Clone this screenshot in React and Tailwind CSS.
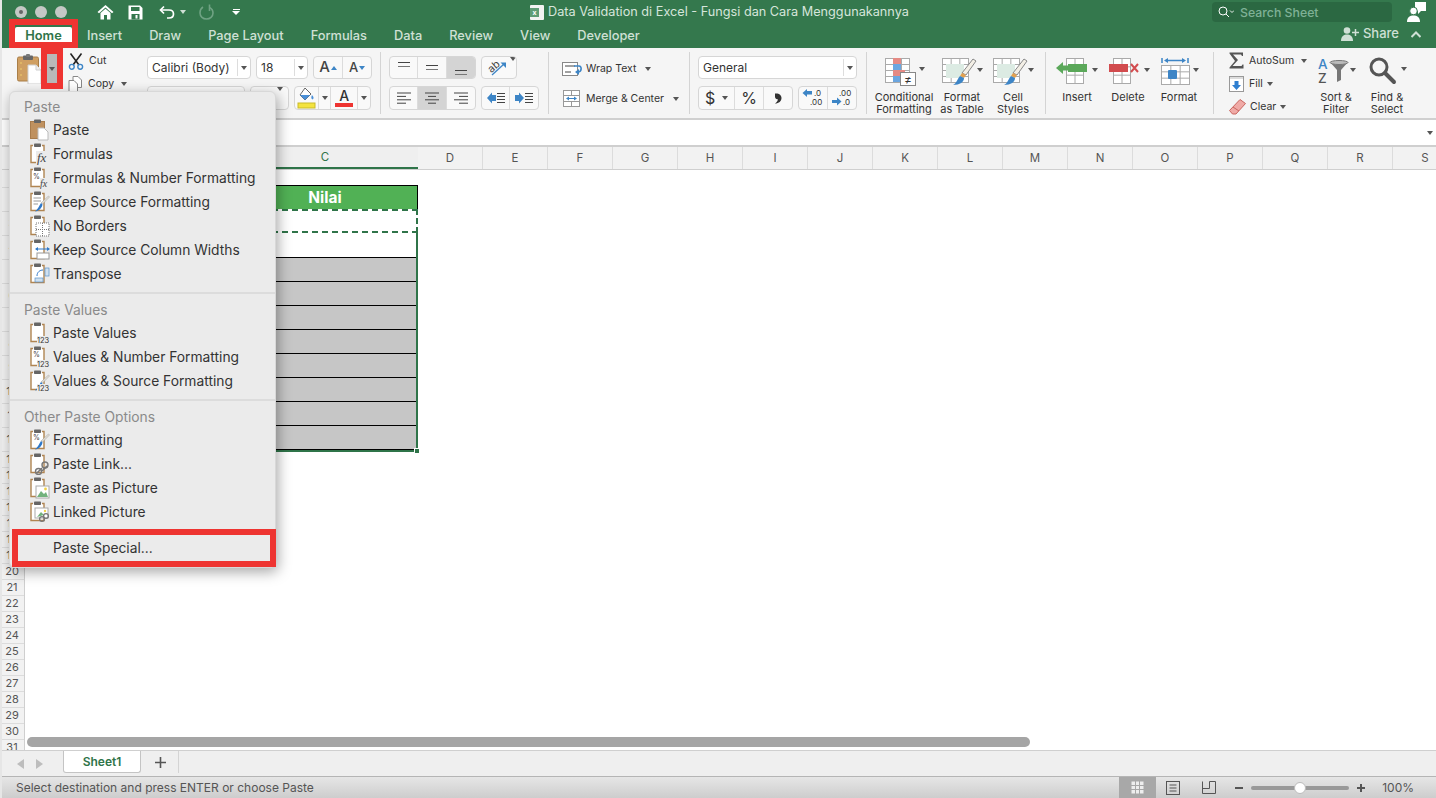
import React from "react";

const Caret = ({ className = "" }) => (
  <span className={`inline-block w-0 h-0 border-x-[3px] border-x-transparent border-t-[4px] border-t-[#555] ${className}`} />
);

const Sep = () => <div className="w-px self-stretch my-[4px] bg-[#d4d4d4] shrink-0" />;

const Seg = ({ className = "", children }) => (
  <div className={`flex items-stretch h-full bg-[#f9f9f9] border border-[#d6d6d6] rounded-[4px] overflow-hidden ${className}`}>
    {children}
  </div>
);

const Btn = ({ w, active, className = "", children }) => (
  <div className={`flex items-center justify-center border-r border-[#dcdcdc] last:border-r-0 ${w} ${active ? "bg-[#d4d4d4]" : ""} ${className}`}>
    {children}
  </div>
);

const Lines = ({ kind }) => {
  const rows = {
    left: [[0, 14], [0, 9], [0, 14], [0, 9]],
    center: [[0, 14], [3, 8], [0, 14], [3, 8]],
    right: [[0, 14], [5, 9], [0, 14], [5, 9]],
  }[kind];
  return (
    <svg width="14" height="12" viewBox="0 0 14 12">
      {rows.map(([x, w], i) => (
        <rect key={i} x={x} y={i * 3.4 + 0.5} width={w} height="1" fill="#444" />
      ))}
    </svg>
  );
};

const VAlign = ({ y }) => (
  <svg width="14" height="21" viewBox="0 0 14 21">
    <rect x="1" y={y} width="12" height="1" fill="#444" />
    <rect x="1" y={y + 4} width="12" height="1" fill="#777" />
  </svg>
);

const HomeIcon = () => (
  <svg width="17" height="16" viewBox="0 0 17 16">
    <path d="M8.5 1 L16.5 8 L15 9.3 L8.5 3.6 L2 9.3 L0.5 8 Z" fill="#fff" />
    <path d="M3.5 9 L8.5 4.8 L13.5 9 V15.5 H10 V11 H7 V15.5 H3.5 Z" fill="#fff" />
  </svg>
);

const SaveIcon = () => (
  <svg width="15" height="15" viewBox="0 0 15 15">
    <path d="M0.5 0.5 H12 L14.5 3 V14.5 H0.5 Z" fill="#fff" />
    <rect x="3" y="2" width="8.5" height="4" fill="#34784d" />
    <rect x="3.5" y="9" width="8" height="5.5" fill="#34784d" />
    <rect x="7.5" y="10" width="2" height="3.5" fill="#fff" />
  </svg>
);

const UndoIcon = ({ color = "#fff" }) => (
  <svg width="16" height="14" viewBox="0 0 16 14" fill="none">
    <path d="M5 1.5 L1.5 5 L5 8.5" stroke={color} strokeWidth="1.7" />
    <path d="M2 5 H10 C13 5 14.5 7 14.5 9 C14.5 11 13 13 10 13 H8" stroke={color} strokeWidth="1.7" />
  </svg>
);

const RedoIcon = () => (
  <svg width="15" height="16" viewBox="0 0 15 16" fill="none">
    <path d="M4 3 C1.5 4.5 1 7 1 9 C1 12.5 4 15 7.5 15 C11 15 14 12.5 14 9 C14 6.5 12.5 4.5 10.5 3.5" stroke="#6fa283" strokeWidth="1.6" />
    <path d="M10.5 0.5 V7" stroke="#6fa283" strokeWidth="1.6" />
  </svg>
);

const PasteBig = () => (
  <svg width="24" height="30" viewBox="0 0 24 30">
    <rect x="0.5" y="3" width="21" height="24" rx="1.5" fill="#cf9f62" stroke="#a97e48" />
    <circle cx="4" cy="9" r="0.8" fill="#f2d26b" />
    <circle cx="4" cy="15" r="0.8" fill="#f2d26b" />
    <circle cx="4" cy="21" r="0.8" fill="#f2d26b" />
    <rect x="6" y="1.5" width="10" height="4.5" rx="1" fill="#666" />
    <rect x="9" y="0" width="4" height="3" rx="1" fill="#777" />
    <path d="M11 11 H19 L24 16 V30 H11 Z" fill="#fff" stroke="#cfcfcf" />
    <path d="M19 11 V16 H24" fill="#eee" stroke="#cfcfcf" />
  </svg>
);

const CutIcon = () => (
  <svg width="16" height="17" viewBox="0 0 16 17" fill="none">
    <path d="M2.5 0.5 L11 12" stroke="#222" strokeWidth="1.6" />
    <path d="M13.5 0.5 L5 12" stroke="#222" strokeWidth="1.6" />
    <circle cx="3.8" cy="13.8" r="2.4" stroke="#3d85c6" strokeWidth="1.4" />
    <circle cx="12.2" cy="13.8" r="2.4" stroke="#3d85c6" strokeWidth="1.4" />
  </svg>
);

const CopyIcon = () => (
  <svg width="15" height="16" viewBox="0 0 15 16" fill="#fff" stroke="#888">
    <path d="M5 0.5 H10 L13.5 4 V11.5 H5 Z" />
    <path d="M1 4.5 H6 L9.5 8 V15.5 H1 Z" />
  </svg>
);

const FillIcon = () => (
  <svg width="20" height="22" viewBox="0 0 20 22">
    <path d="M8 1 L14 7 L8 13 L3 8 Z" fill="#fff" stroke="#666" />
    <path d="M3 8 L13 8 L8 13 Z" fill="#4a90d9" />
    <path d="M15 8 C17 10 17 12 15.5 12.5 C14 12 14 10 15 8 Z" fill="#4a90d9" />
    <rect x="1" y="16" width="17" height="5" fill="#f4e33f" stroke="#c9bb2d" />
  </svg>
);

const OrientIcon = () => (
  <svg width="22" height="20" viewBox="0 0 22 20">
    <text x="3" y="13" fontSize="10.5" fill="#444" transform="rotate(-40 9 10)" fontFamily="Inter, sans-serif">ab</text>
    <path d="M7 18 L19 7" stroke="#3d85c6" strokeWidth="1.3" />
    <path d="M15.5 5.5 H21 V11 Z" fill="#3d85c6" />
  </svg>
);

const Indent = ({ flip }) => (
  <svg width="18" height="12" viewBox="0 0 18 12">
    {flip ? <path d="M0 3 H4 V0.5 L9 6 L4 11.5 V9 H0 Z" fill="#3d85c6" /> : <path d="M9 3 H5 V0.5 L0 6 L5 11.5 V9 H9 Z" fill="#3d85c6" />}
    {[1, 4, 7, 10].map((y) => (
      <rect key={y} x="10" y={y} width="8" height="1" fill="#444" />
    ))}
  </svg>
);

const WrapIcon = () => (
  <svg width="21" height="16" viewBox="0 0 21 16" fill="none">
    <rect x="0.5" y="1.5" width="15" height="13" fill="#fff" stroke="#888" />
    <path d="M3 5 H13 M3 11 H9" stroke="#444" />
    <path d="M12 5 H17 C20 5 20 11 16 11" stroke="#3d85c6" strokeWidth="1.6" />
    <path d="M17 8 L13 11 L17 14 Z" fill="#3d85c6" />
  </svg>
);

const MergeIcon = () => (
  <svg width="17" height="17" viewBox="0 0 17 17" fill="none">
    <rect x="0.5" y="0.5" width="16" height="16" fill="#fff" stroke="#999" />
    <path d="M0.5 5.5 H16.5 M0.5 11.5 H16.5 M8.5 0.5 V5.5 M8.5 11.5 V16.5" stroke="#999" />
    <path d="M4 8.5 H13" stroke="#3d85c6" />
    <path d="M6 6.5 L3 8.5 L6 10.5 Z M11 6.5 L14 8.5 L11 10.5 Z" fill="#3d85c6" />
  </svg>
);

const DecIcon = ({ more }) => (
  <svg width="24" height="18" viewBox="0 0 24 18" fontFamily="Inter, sans-serif" fontSize="8" fill="#333">
    {more ? (
      <>
        <text x="9" y="7">.00</text>
        <text x="13" y="16">.0</text>
        <path d="M2 11 H7 V8.5 L11.5 12.5 L7 16.5 V14 H2 Z" fill="#3d85c6" />
      </>
    ) : (
      <>
        <text x="13" y="7">.0</text>
        <text x="9" y="16">.00</text>
        <path d="M11 2 H6 V0 L1.5 4 L6 8 V5.5 H11 Z" fill="#3d85c6" />
      </>
    )}
  </svg>
);

const CommaIcon = () => (
  <svg width="8" height="11" viewBox="0 0 8 11">
    <path d="M1 0.5 C5 0 7.5 2 7.5 5 C7.5 8 5 10.5 1 10.5 C3 9 4 7.5 3.8 6 C3 6.5 1 6 1 3.5 Z" fill="#333" />
  </svg>
);

const GridLines = ({ x, y, w, h, cols, rows }) => (
  <g stroke="#aaa" fill="none">
    <rect x={x + 0.5} y={y + 0.5} width={w} height={h} fill="#fff" />
    {Array.from({ length: cols - 1 }, (_, i) => (
      <path key={i} d={`M${x + 0.5 + ((i + 1) * w) / cols} ${y} V${y + h}`} />
    ))}
    {Array.from({ length: rows - 1 }, (_, i) => (
      <path key={i} d={`M${x} ${y + 0.5 + ((i + 1) * h) / rows} H${x + w}`} />
    ))}
  </g>
);

const SvgCaret = ({ x, y }) => <path d={`M${x} ${y} h6 l-3 4 z`} fill="#555" />;

const CondIcon = () => (
  <svg width="46" height="30" viewBox="0 0 46 30">
    <GridLines x={4} y={2} w={24} h={24} cols={3} rows={4} />
    <rect x="12" y="2" width="8" height="6" fill="#e58a84" />
    <rect x="12" y="8" width="8" height="6" fill="#6ba6e0" />
    <rect x="12" y="14" width="12" height="6" fill="#e58a84" />
    <rect x="12" y="20" width="8" height="6" fill="#6ba6e0" />
    <rect x="19.5" y="16.5" width="15" height="13" fill="#fff" stroke="#888" />
    <text x="27" y="27.5" fontSize="12" textAnchor="middle" fill="#333">≠</text>
    <SvgCaret x={38} y={11} />
  </svg>
);

const BrushIcon = ({ fill }) => (
  <svg width="46" height="30" viewBox="0 0 46 30">
    <GridLines x={3} y={2} w={26} h={24} cols={3} rows={4} />
    <rect x="7" y="8" width="18" height="14" fill={fill} />
    <path d="M34 3 L37 5 L27 19 L23 17 Z" fill="#f3efe6" stroke="#888" />
    <path d="M23 17 L27 19 L25 22 L21 20 Z" fill="#e3a14f" />
    <path d="M21 20 L25 22 C25 26 21 29 14 29 C18 27 18 23 21 20 Z" fill="#3d85c6" />
    <SvgCaret x={38} y={12} />
  </svg>
);

const InsertIcon = () => (
  <svg width="46" height="30" viewBox="0 0 46 30">
    <GridLines x={12} y={2} w={17} h={25} cols={2} rows={3} />
    <rect x="14" y="8" width="19" height="8" fill="#5ba85a" />
    <path d="M2 12 L9 6 V18 Z" fill="#5ba85a" />
    <rect x="8" y="9.5" width="6" height="5" fill="#5ba85a" />
    <SvgCaret x={38} y={12} />
  </svg>
);

const DeleteIcon = () => (
  <svg width="46" height="30" viewBox="0 0 46 30">
    <GridLines x={8} y={2} w={17} h={25} cols={2} rows={3} />
    <rect x="4" y="8" width="19" height="8" fill="#d24c4f" />
    <path d="M26 8 L33 16 M33 8 L26 16" stroke="#d24c4f" strokeWidth="2" />
    <SvgCaret x={39} y={12} />
  </svg>
);

const FormatIcon = () => (
  <svg width="46" height="30" viewBox="0 0 46 30">
    <GridLines x={5} y={9} w={28} h={19} cols={3} rows={3} />
    <rect x="12" y="14" width="9" height="9" rx="1" fill="#3d85c6" />
    <path d="M6 2 V7 M32 2 V7 M10 4.5 H28" stroke="#3d85c6" strokeWidth="1.5" />
    <path d="M12 2 L8 4.5 L12 7 Z M26 2 L30 4.5 L26 7 Z" fill="#3d85c6" />
    <SvgCaret x={37} y={12} />
  </svg>
);

const SortIcon = () => (
  <svg width="46" height="30" viewBox="0 0 46 30" fontFamily="Inter, sans-serif">
    <text x="5" y="13" fontSize="13.5" fontWeight="500" fill="#3d85c6">A</text>
    <text x="5" y="27" fontSize="13.5" fontWeight="500" fill="#555">Z</text>
    <path d="M17 6 H35 L28 14 V24 L24 26 V14 Z" fill="#777" />
    <ellipse cx="26" cy="6.5" rx="9" ry="2" fill="#bbb" stroke="#777" />
    <SvgCaret x={37} y={12} />
  </svg>
);

const FindIcon = () => (
  <svg width="46" height="30" viewBox="0 0 46 30" fill="none">
    <circle cx="15" cy="11" r="8" stroke="#555" strokeWidth="3" />
    <path d="M21 17 L30 26" stroke="#555" strokeWidth="4" strokeLinecap="round" />
    <SvgCaret x={37} y={11} />
  </svg>
);

const SigmaIcon = () => (
  <svg width="15" height="17" viewBox="0 0 15 17">
    <path d="M0.5 0.5 H14 V4 H13 L12 2.5 H4 L9 8 L3.5 14 H12.5 L13.5 12.5 H14.5 V16.5 H0.5 V15.5 L6 9 L0.5 1.5 Z" fill="#555" />
  </svg>
);

const FillDown = () => (
  <svg width="15" height="16" viewBox="0 0 15 16">
    <rect x="0.5" y="0.5" width="14" height="15" fill="#fff" stroke="#999" />
    <rect x="1" y="1" width="13" height="2" fill="#ddd" />
    <path d="M5.5 5 H9.5 V9 H12 L7.5 14 L3 9 H5.5 Z" fill="#2f7fd0" />
  </svg>
);

const EraserIcon = () => (
  <svg width="17" height="16" viewBox="0 0 17 16">
    <path d="M11 0.5 L16.5 4.5 L7 15 L3.5 15 L0.5 11.5 Z" fill="#f0aaa6" stroke="#c96660" />
    <path d="M4 8 L10 12" stroke="#c96660" />
  </svg>
);

const LargeTool = ({ icon, label, className = "" }) => (
  <div className={`flex flex-col items-center shrink-0 ${className}`}>
    <div className="h-[43px] pt-[8px] flex justify-center w-[46px]">{icon}</div>
    <div className="text-[11px] leading-[12px] text-center text-[#333] whitespace-pre-line">{label}</div>
  </div>
);

const Ribbon = () => (
  <div className="h-[70px] flex bg-[#f5f5f5] text-[#333] text-[10.5px] shrink-0">
    <div className="w-[147px] shrink-0 flex">
      <div className="ml-[17px] mt-[6px] w-[26px]"><PasteBig /></div>
      <div className="ml-[4px] mt-[6px] w-[10px] h-[29px] bg-[#b9b9b9] flex items-center justify-center"><Caret /></div>
      <div className="ml-[11px] mt-[5px] flex flex-col gap-[7px]">
        <div className="flex items-center gap-[5px] h-[16px]"><CutIcon /><span>Cut</span></div>
        <div className="flex items-center gap-[5px] h-[16px]"><CopyIcon /><span>Copy</span><Caret className="ml-[2px]" /></div>
      </div>
    </div>

    <div className="w-[233px] shrink-0 pt-[8px] flex flex-col gap-[7px]">
      <div className="flex h-[23px] gap-[5px]">
        <div className="w-[104px] flex items-center bg-white border border-[#d6d6d6] rounded-[4px] text-[12px] pl-[4px]">
          <span className="flex-1 whitespace-nowrap">Calibri (Body)</span>
          <span className="border-l border-[#ddd] h-[17px] w-[13px] flex items-center justify-center"><Caret /></span>
        </div>
        <div className="w-[52px] flex items-center bg-white border border-[#d6d6d6] rounded-[4px] text-[12px] pl-[4px]">
          <span className="flex-1">18</span>
          <span className="border-l border-[#ddd] h-[17px] w-[13px] flex items-center justify-center"><Caret /></span>
        </div>
        <Seg className="w-[59px]">
          <Btn w="w-[30px]"><span className="text-[15px] font-medium text-[#444]">A</span><span className="ml-px w-0 h-0 border-x-[3px] border-x-transparent border-b-[4px] border-b-[#3d85c6]" /></Btn>
          <Btn w="w-[29px]"><span className="text-[13px] font-medium text-[#444]">A</span><span className="ml-px w-0 h-0 border-x-[3px] border-x-transparent border-t-[4px] border-t-[#3d85c6]" /></Btn>
        </Seg>
      </div>
      <div className="flex h-[24px] gap-[5px]">
        <Seg className="w-[98px]" />
        <Seg className="w-[39px] justify-end items-center pr-[5px]"><Caret /></Seg>
        <Seg className="w-[77px]">
          <Btn w="w-[25px]"><FillIcon /></Btn>
          <Btn w="w-[12px]"><Caret /></Btn>
          <Btn w="w-[28px]" className="flex-col">
            <span className="text-[14px] leading-[14px] font-medium text-[#333]">A</span>
            <span className="w-[18px] h-[4px] bg-[#ee3431]" />
          </Btn>
          <Btn w="w-[12px]"><Caret /></Btn>
        </Seg>
      </div>
    </div>
    <Sep />

    <div className="w-[167px] shrink-0 pt-[8px] pl-[8px] flex flex-col gap-[7px]">
      <div className="flex h-[23px] gap-[5px]">
        <Seg className="w-[87px] bg-[#f0f0f0]">
          <Btn w="w-[29px]"><VAlign y={5} /></Btn>
          <Btn w="w-[29px]"><VAlign y={8} /></Btn>
          <Btn w="w-[29px]" active><VAlign y={13} /></Btn>
        </Seg>
        <Seg className="w-[36px] items-center pl-[3px] gap-[3px]"><OrientIcon /><Caret /></Seg>
      </div>
      <div className="flex h-[24px] gap-[5px]">
        <Seg className="w-[87px]">
          <Btn w="w-[29px]"><Lines kind="left" /></Btn>
          <Btn w="w-[29px]" active><Lines kind="center" /></Btn>
          <Btn w="w-[29px]"><Lines kind="right" /></Btn>
        </Seg>
        <Seg className="w-[58px]">
          <Btn w="w-[29px]"><Indent /></Btn>
          <Btn w="w-[29px]"><Indent flip /></Btn>
        </Seg>
      </div>
    </div>
    <Sep />

    <div className="w-[140px] shrink-0 pl-[13px] pt-[8px] flex flex-col gap-[7px]">
      <div className="flex items-center h-[23px] pt-[2px]"><WrapIcon /><span className="ml-[3px]">Wrap Text</span><Caret className="ml-[9px]" /></div>
      <div className="flex items-center h-[24px] pt-[1px]"><span className="ml-[1px] mr-[6px] flex"><MergeIcon /></span><span>Merge &amp; Center</span><Caret className="ml-[9px]" /></div>
    </div>
    <Sep />

    <div className="w-[176px] shrink-0 pl-[8px] pt-[8px] flex flex-col gap-[7px]">
      <div className="w-[159px] h-[23px] flex items-center bg-white border border-[#d6d6d6] rounded-[4px] text-[12px] pl-[4px]">
        <span className="flex-1">General</span>
        <span className="border-l border-[#ddd] h-[17px] w-[13px] flex items-center justify-center"><Caret /></span>
      </div>
      <div className="flex h-[24px] gap-[5px]">
        <Seg className="w-[95px]">
          <div className="w-[37px] flex items-center border-r border-[#dcdcdc] text-[16px] pl-[6px] gap-[7px]"><span>$</span><Caret /></div>
          <Btn w="w-[29px]"><span className="text-[16px]">%</span></Btn>
          <Btn w="w-[29px]"><CommaIcon /></Btn>
        </Seg>
        <Seg className="w-[59px]">
          <Btn w="w-[30px]"><DecIcon /></Btn>
          <Btn w="w-[29px]"><DecIcon more /></Btn>
        </Seg>
      </div>
    </div>
    <Sep />

    <div className="w-[178px] shrink-0 flex text-[#333]">
      <LargeTool className="ml-[14px] w-[46px]" icon={<CondIcon />} label={"Conditional\nFormatting"} />
      <LargeTool className="ml-[12px] w-[46px]" icon={<BrushIcon fill="#dcebe3" />} label={"Format\nas Table"} />
      <LargeTool className="ml-[5px] w-[46px]" icon={<BrushIcon fill="#dcebe3" />} label={"Cell\nStyles"} />
    </div>
    <Sep />

    <div className="w-[167px] shrink-0 flex">
      <LargeTool className="ml-[8px]" icon={<InsertIcon />} label="Insert" />
      <LargeTool className="ml-[5px]" icon={<DeleteIcon />} label="Delete" />
      <LargeTool className="ml-[5px]" icon={<FormatIcon />} label="Format" />
    </div>
    <Sep />

    <div className="flex-1 flex">
      <div className="w-[101px] ml-[15px] pt-[4px] flex flex-col gap-[6px] shrink-0">
        <div className="flex items-center h-[17px]"><SigmaIcon /><span className="ml-[5px]">AutoSum</span><Caret className="ml-[7px]" /></div>
        <div className="flex items-center h-[17px]"><FillDown /><span className="ml-[5px]">Fill</span><Caret className="ml-[4px]" /></div>
        <div className="flex items-center h-[17px]"><EraserIcon /><span className="ml-[4px]">Clear</span><Caret className="ml-[4px]" /></div>
      </div>
      <LargeTool className="ml-[-17px]" icon={<SortIcon />} label={"Sort &\nFilter"} />
      <LargeTool className="ml-[5px]" icon={<FindIcon />} label={"Find &\nSelect"} />
    </div>
  </div>
);

const ClipBase = ({ children }) => (
  <svg width="20" height="22" viewBox="0 0 20 22" fontFamily="Inter, sans-serif">
    <path d="M3 2.5 H1 V19.5 H14 V2.5 H12" fill="#fff" stroke="#b08552" strokeWidth="1.4" />
    <rect x="4" y="0.5" width="7" height="3.6" rx="0.8" fill="#666" />
    {children}
  </svg>
);

const Tiny = ({ x, y, size = 6, fill = "#444", italic, family, children }) => (
  <text x={x} y={y} fontSize={size} fill={fill} fontStyle={italic ? "italic" : "normal"} fontFamily={family}>
    {children}
  </text>
);

const SmallBrush = () => (
  <>
    <path d="M18.5 5 L19.5 6 L12.5 13 L11 12 Z" fill="#e6e1d6" stroke="#999" strokeWidth="0.5" />
    <path d="M11 12 L12.5 13.5 C12 17 9 20 5 20.5 C8 18 9 15 11 12 Z" fill="#2f78c8" />
  </>
);

const Num123 = () => (
  <rect x="7" y="14" width="13" height="8" fill="#ebebeb" />
);

const menuIcons = {
  paste: (
    <svg width="20" height="22" viewBox="0 0 20 22">
      <rect x="0.5" y="2.5" width="14" height="17" fill="#bf915f" stroke="#a87c4c" />
      <rect x="4" y="0.5" width="7" height="3.6" rx="0.8" fill="#666" />
      <path d="M8 9 H14 L18 13 V21 H8 Z" fill="#fff" stroke="#bbb" />
    </svg>
  ),
  fx: <ClipBase><rect x="6" y="8" width="14" height="14" fill="#ebebeb" /><Tiny x={7} y={19} size={13} italic family="Liberation Serif, serif">fx</Tiny></ClipBase>,
  pctfx: <ClipBase><Tiny x={3} y={12} size={7}>%</Tiny><rect x="10" y="11" width="10" height="11" fill="#ebebeb" /><Tiny x={10} y={20} size={10} italic family="Liberation Serif, serif">fx</Tiny></ClipBase>,
  brush: <ClipBase><path d="M3.5 7 H11 M3.5 10 H11 M3.5 13 H8" stroke="#999" /><SmallBrush /></ClipBase>,
  borders: <ClipBase><rect x="6" y="8" width="13" height="13" fill="#fff" stroke="#777" strokeDasharray="1 1" /><path d="M12.5 8 V21 M6 14.5 H19" stroke="#777" strokeDasharray="1 1" /></ClipBase>,
  widths: <ClipBase><rect x="7" y="14" width="12" height="6" fill="#fff" stroke="#999" /><path d="M6 10 H19" stroke="#2f78c8" /><path d="M8 8 L5 10 L8 12 Z M17 8 L20 10 L17 12 Z" fill="#2f78c8" /></ClipBase>,
  transpose: <ClipBase><rect x="15" y="5" width="4" height="8" fill="#cfe0f0" stroke="#5b93c9" strokeWidth="0.7" /><rect x="5" y="15" width="8" height="4" fill="#cfe0f0" stroke="#5b93c9" strokeWidth="0.7" /><path d="M7 13 C7 9 10 7 13 7" fill="none" stroke="#2f78c8" /></ClipBase>,
  val: <ClipBase><Num123 /><Tiny x={7} y={21} size={7.5} fill="#333">123</Tiny></ClipBase>,
  pctval: <ClipBase><Tiny x={3} y={11} size={7}>%</Tiny><Num123 /><Tiny x={7} y={21} size={7.5} fill="#333">123</Tiny></ClipBase>,
  brushval: <ClipBase><SmallBrush /><Num123 /><Tiny x={7} y={21} size={7.5} fill="#333">123</Tiny></ClipBase>,
  format: <ClipBase><Tiny x={3} y={11} size={7}>%</Tiny><SmallBrush /></ClipBase>,
  link: <ClipBase><path d="M7 20 L12 15 M12 18 L17 13" stroke="#777" strokeWidth="1.6" fill="none" /><circle cx="15" cy="12" r="3" fill="none" stroke="#777" strokeWidth="1.4" /><circle cx="8.5" cy="18.5" r="3" fill="none" stroke="#777" strokeWidth="1.4" /></ClipBase>,
  picture: <ClipBase><rect x="6" y="9" width="13" height="12" fill="#fff" stroke="#aaa" /><path d="M7 20 L11 14 L14 17 L16 15 L18 20 Z" fill="#72b27d" /><circle cx="15.5" cy="12" r="1.4" fill="#f0d14a" /></ClipBase>,
  linked: <ClipBase><rect x="5" y="7" width="13" height="10" fill="#fff" stroke="#aaa" /><path d="M7 16 L11 11 L14 14 Z" fill="#72b27d" /><circle cx="15" cy="10" r="1.2" fill="#f0d14a" /><circle cx="12" cy="18" r="2.4" fill="none" stroke="#777" strokeWidth="1.3" /><circle cx="16" cy="15" r="2.4" fill="none" stroke="#777" strokeWidth="1.3" /></ClipBase>,
};

const MenuHead = ({ children }) => (
  <div className="h-[24px] pl-[14px] flex items-center text-[13.8px] text-[#8a8a8a]">{children}</div>
);

const MenuItem = ({ icon, children }) => (
  <div className="h-[24px] flex items-center text-[13.8px] text-[#333]">
    <span className="w-[21px] ml-[20px] mr-[2px] flex">{menuIcons[icon]}</span>
    {children}
  </div>
);

const MenuSep = () => <div className="h-[2px] bg-[#dcdcdc]" />;

const PasteMenu = () => (
  <div className="absolute left-[9px] top-[91px] w-[267px] h-[477px] bg-[#ebebeb] rounded-[6px] border border-[#d8d8d8] shadow-[2px_4px_14px_rgba(0,0,0,0.35)] pt-[3px] flex flex-col">
    <MenuHead>Paste</MenuHead>
    <div className="mt-[-1px]">
      <MenuItem icon="paste">Paste</MenuItem>
      <MenuItem icon="fx">Formulas</MenuItem>
      <MenuItem icon="pctfx">Formulas &amp; Number Formatting</MenuItem>
      <MenuItem icon="brush">Keep Source Formatting</MenuItem>
      <MenuItem icon="borders">No Borders</MenuItem>
      <MenuItem icon="widths">Keep Source Column Widths</MenuItem>
      <MenuItem icon="transpose">Transpose</MenuItem>
    </div>
    <div className="mt-[6px]"><MenuSep /></div>
    <div className="mt-[4px]"><MenuHead>Paste Values</MenuHead></div>
    <div className="mt-[-1px]">
      <MenuItem icon="val">Paste Values</MenuItem>
      <MenuItem icon="pctval">Values &amp; Number Formatting</MenuItem>
      <MenuItem icon="brushval">Values &amp; Source Formatting</MenuItem>
    </div>
    <div className="mt-[6px]"><MenuSep /></div>
    <div className="mt-[4px]"><MenuHead>Other Paste Options</MenuHead></div>
    <div className="mt-[-1px]">
      <MenuItem icon="format">Formatting</MenuItem>
      <MenuItem icon="link">Paste Link...</MenuItem>
      <MenuItem icon="picture">Paste as Picture</MenuItem>
      <MenuItem icon="linked">Linked Picture</MenuItem>
    </div>
    <div className="mt-[12px] h-[24px] pl-[43px] flex items-center text-[13.8px] text-[#333]">Paste Special...</div>
  </div>
);

const colLetters = "DEFGHIJKLMNOPQRS".split("");

const rowHeight = (n) => {
  if (n === 1) return "h-[18px]";
  if (n <= 12) return "h-[24px]";
  return "h-[16px]";
};

const Sheet = () => (
  <div className="relative flex-1 overflow-hidden bg-white flex">
    <div className="w-[25px] shrink-0 bg-[#f2f2f2] border-r border-[#cfcfcf] flex flex-col">
      {Array.from({ length: 31 }, (_, i) => i + 1).map((n) => (
        <div key={n} className={`${rowHeight(n)} shrink-0 flex items-center justify-center text-[11px] text-[#555] border-b border-[#dcdcdc]`}>{n}</div>
      ))}
    </div>
    <div className="ml-[207px] w-[186px] pt-[15px] shrink-0">
      <div className="h-[24px] bg-[#51b155] border border-black border-b-0 flex items-center justify-center pt-[1px] text-white font-bold text-[15.5px]">Nilai</div>
      <div className="h-[24px] border-y-2 border-r-2 border-dashed border-[#2f7449]" />
      <div className="relative border-r-2 border-b-2 border-[#2f7449]">
        <div className="h-[25px] border-b border-black" />
        {Array.from({ length: 8 }, (_, i) => (
          <div key={i} className="h-[24px] last:h-[23px] bg-[#c6c6c6] border-b border-black last:border-b-0" />
        ))}
        <div className="absolute right-[-4px] bottom-[-4px] w-[6px] h-[6px] bg-[#2f7449] border border-white" />
      </div>
    </div>
    <div className="absolute left-[27px] bottom-[3px] w-[1003px] h-[10px] rounded-full bg-[#a5a5a5]" />
  </div>
);

export default function App() {
  return (
    <div className="relative w-[1436px] h-[798px] overflow-hidden flex flex-col bg-white font-['Inter',sans-serif]">
      <div className="h-[48px] shrink-0 bg-[#34784d] flex flex-col">
        <div className="h-[24px] flex items-center relative">
          <div className="ml-[15px] flex gap-[8px]">
            <span className="w-[12px] h-[12px] rounded-full bg-[#c4c8c5] flex items-center justify-center"><span className="w-[4px] h-[4px] rounded-full bg-[#666]" /></span>
            <span className="w-[12px] h-[12px] rounded-full bg-[#c4c8c5]" />
            <span className="w-[12px] h-[12px] rounded-full bg-[#c4c8c5]" />
          </div>
          <div className="ml-[30px] flex"><HomeIcon /></div>
          <div className="ml-[14px] flex"><SaveIcon /></div>
          <div className="ml-[16px] flex"><UndoIcon /></div>
          <div className="ml-[5px] w-0 h-0 border-x-[3px] border-x-transparent border-t-[4px] border-t-[#cfe0d5]" />
          <div className="ml-[13px] flex"><RedoIcon /></div>
          <div className="ml-[18px] flex flex-col items-center gap-[1px]">
            <span className="w-[7px] h-px bg-white" />
            <span className="w-0 h-0 border-x-[4px] border-x-transparent border-t-[4px] border-t-white" />
          </div>
          <div className="ml-[290px] w-[14px] h-[15px] flex items-center bg-[#f2f2f2] rounded-[1px] relative">
            <span className="w-[9px] h-[9px] bg-[#5f9c76] text-white text-[7px] leading-[9px] text-center font-bold">x</span>
          </div>
          <div className="ml-[4px] text-[12.7px] text-[#d6e5db] whitespace-nowrap">Data Validation di Excel - Fungsi dan Cara Menggunakannya</div>
          <div className="ml-auto mr-[44px] w-[180px] h-[20px] rounded-[4px] bg-[#2b6842] flex items-center pl-[6px]">
            <svg width="16" height="12" viewBox="0 0 16 12" fill="none" stroke="#fff">
              <circle cx="5" cy="5" r="4" />
              <path d="M8 8 L11 11" />
              <path d="M12 4.5 L14 6.5 L16 4.5" strokeWidth="0.9" />
            </svg>
            <span className="ml-[6px] pt-[2px] text-[12.3px] font-medium text-[#7fb196]">Search Sheet</span>
          </div>
          <svg className="absolute left-[1407px] top-[2px]" width="19" height="20" viewBox="0 0 19 20">
            <path d="M8 0 H19 V9 H14 L11 12 V9 H8 Z" fill="#fff" />
            <circle cx="6.5" cy="9" r="3.8" fill="#fff" stroke="#34784d" />
            <path d="M0 20 C0 15 3 13.5 6.5 13.5 C10 13.5 13 15 13 20 Z" fill="#fff" />
          </svg>
        </div>
        <div className="h-[24px] flex items-center text-[12.8px] font-medium text-[#cfe0d5]">
          <div className="ml-[15px] w-[57px] h-[19px] bg-white rounded-[2px] flex items-center justify-center text-[#2f7449] font-semibold shrink-0 mr-[15px]">Home</div>
          <div className="flex gap-[27px]">
            {["Insert", "Draw", "Page Layout", "Formulas", "Data", "Review", "View", "Developer"].map((t) => (
              <span key={t} className="whitespace-nowrap">{t}</span>
            ))}
          </div>
          <div className="ml-auto flex items-center mb-[4px]">
            <svg width="18" height="14" viewBox="0 0 18 14" fill="#cfe0d5">
              <circle cx="6" cy="3.5" r="3.3" />
              <path d="M0 14 C0 9 3 7.5 6 7.5 C9 7.5 12 9 12 14 Z" />
              <path d="M11 5.5 H18 M14.5 2 V9" stroke="#cfe0d5" strokeWidth="1.5" />
            </svg>
            <span className="ml-[4px] text-[13px]">Share</span>
            <svg className="ml-[12px] mr-[15px]" width="10" height="7" viewBox="0 0 10 7" fill="none" stroke="#cfe0d5" strokeWidth="2">
              <path d="M0.5 6 L5 1.5 L9.5 6" />
            </svg>
          </div>
        </div>
      </div>

      <Ribbon />

      <div className="h-[27px] shrink-0 bg-white border-t-2 border-[#d0d0d0] flex items-center justify-end pr-[3px]"><Caret /></div>
      <div className="h-[25px] shrink-0 border-t-2 border-[#c8c8c8] bg-[#f2f2f2] border-b border-[#cfcfcf] flex text-[11.5px] text-[#555]">
        <div className="w-[232px] shrink-0" />
        <div className="w-[186px] shrink-0 border-b-2 border-[#2f7449] bg-[#efefef] flex items-center justify-center pt-[2px] text-[#2f7449]">C</div>
        {colLetters.map((c) => (
          <div key={c} className="w-[65px] shrink-0 border-r border-[#dcdcdc] flex items-center justify-center pt-[2px]">{c}</div>
        ))}
      </div>

      <Sheet />

      <div className="h-[27px] shrink-0 bg-[#efefef] border-t border-[#cfcfcf] border-b border-b-[#b5b5b5] flex text-[#2f7449]">
        <div className="ml-[17px] flex items-center gap-[12px] w-[46px]">
          <span className="w-0 h-0 border-y-[5px] border-y-transparent border-r-[7px] border-r-[#bdbdbd]" />
          <span className="w-0 h-0 border-y-[5px] border-y-transparent border-l-[7px] border-l-[#bdbdbd]" />
        </div>
        <div className="w-[78px] h-[22px] bg-white border-x border-b border-[#c4c4c4] rounded-b-[3px] flex items-center justify-center text-[12px] font-semibold">Sheet1</div>
        <div className="w-[38px] h-[22px] pl-[2px] border-r border-[#d4d4d4] flex items-center justify-center">
          <svg width="11" height="11" viewBox="0 0 11 11" stroke="#555" strokeWidth="1.6"><path d="M5.5 0 V11 M0 5.5 H11" /></svg>
        </div>
      </div>
      <div className="h-[21px] shrink-0 bg-gradient-to-b from-[#e6e6e6] to-[#cdcdcd] flex items-center text-[12px] text-[#555]">
        <span className="ml-[16px]">Select destination and press ENTER or choose Paste</span>
        <div className="ml-auto w-[37px] h-full bg-[#a8a8a8] flex items-center justify-center">
          <svg width="13" height="13" viewBox="0 0 13 13" fill="#eee" stroke="#a8a8a8">
            <rect x="0" y="0" width="13" height="13" />
            <path d="M4.5 0 V13 M8.5 0 V13 M0 4.5 H13 M0 8.5 H13" />
          </svg>
        </div>
        <svg className="ml-[10px]" width="14" height="14" viewBox="0 0 14 14" fill="none" stroke="#555">
          <rect x="0.5" y="0.5" width="13" height="13" />
          <path d="M3.5 4 H10.5 M3.5 7 H10.5 M3.5 10 H10.5" />
        </svg>
        <svg className="ml-[22px]" width="14" height="13" viewBox="0 0 14 13" fill="none" stroke="#555">
          <path d="M0.5 0.5 V12.5 H13.5 V0.5 M7.5 0.5 V7.5 H0.5 M7.5 0.5 H13.5" />
        </svg>
        <span className="ml-[19px] w-[8px] h-[2px] bg-[#555]" />
        <div className="ml-[8px] w-[98px] h-[4px] rounded-full bg-[#999] relative">
          <span className="absolute left-[43px] top-[-4px] w-[12px] h-[12px] rounded-full bg-white border border-[#bbb]" />
        </div>
        <svg className="ml-[8px]" width="8" height="8" viewBox="0 0 8 8" stroke="#555" strokeWidth="2"><path d="M4 0 V8 M0 4 H8" /></svg>
        <span className="ml-[17px] mr-[22px]">100%</span>
      </div>

      <PasteMenu />

      {/* red annotation boxes */}
      <div className="absolute left-[9px] top-[19px] w-[69px] h-[29px] border-[6px] border-[#ee3431]" />
      <div className="absolute left-[41px] top-[48px] w-[22px] h-[41px] border-[6px] border-[#ee3431]" />
      <div className="absolute left-[12px] top-[529px] w-[264px] h-[38px] border-[6px] border-[#ee3431]" />
      <div className="absolute left-0 top-0 w-[2px] h-full bg-[#e6e6e6]" />
    </div>
  );
}
